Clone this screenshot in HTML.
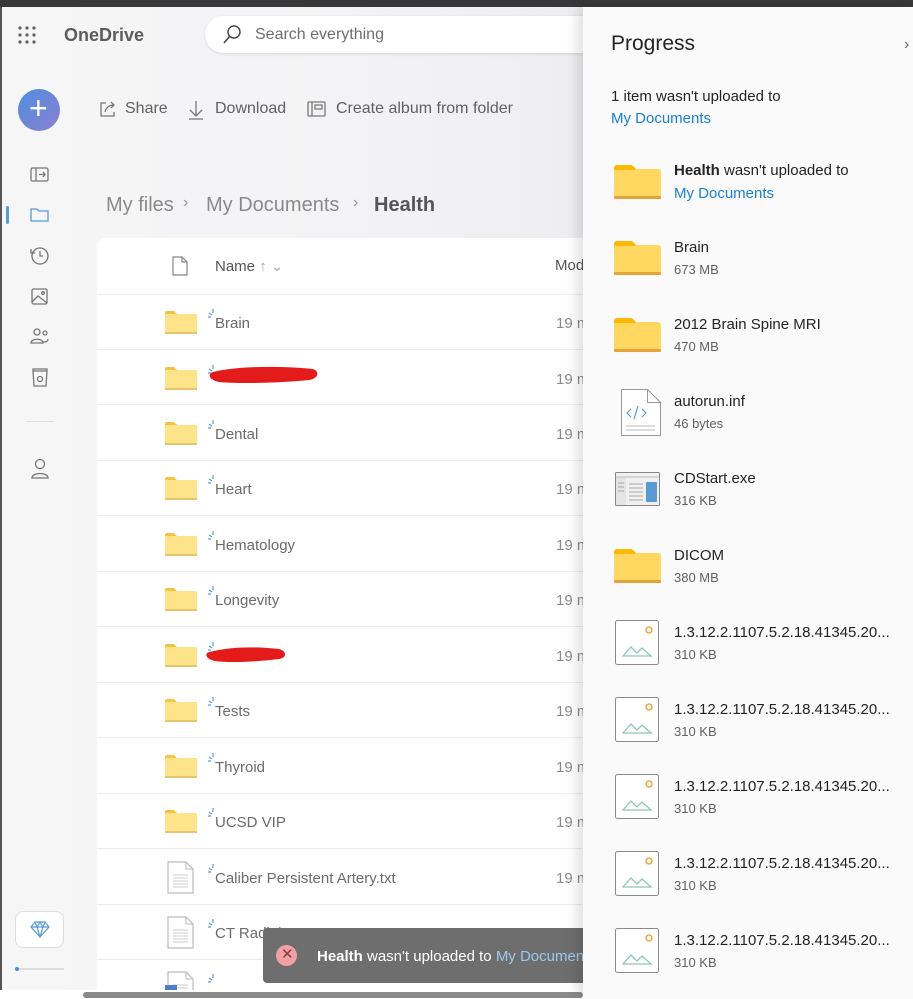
<!DOCTYPE html>
<html><head><meta charset="utf-8"><style>
*{margin:0;padding:0;box-sizing:border-box}
body{width:913px;height:999px;overflow:hidden;position:relative;background:#f5f5f6;font-family:"Liberation Sans",sans-serif;}
.a{position:absolute}
.t{position:absolute;white-space:nowrap}
.fname{position:absolute;left:215px;font-size:15px;color:#6b6b6b}
.date{position:absolute;left:556px;font-size:15px;color:#8a8a8a}
.pn{position:absolute;left:674px;font-size:15px;color:#242424}
.ps{position:absolute;left:674px;font-size:13px;color:#616161}
</style></head><body>
<div class="a" style="left:0;top:0;width:913px;height:7px;background:#383838"></div>
<div class="a" style="left:0;top:7px;width:2px;height:992px;background:#555"></div>
<div class="a" style="left:2px;top:7px;width:581px;height:992px;background:linear-gradient(90deg,#f6f6f7,#f3f3f5 60%,#eeeef0)"></div>

<svg class="a" style="left:17px;top:25px" width="22" height="22"><g fill="#616161"><circle cx="3" cy="3" r="1.6"/><circle cx="10" cy="3" r="1.6"/><circle cx="17" cy="3" r="1.6"/><circle cx="3" cy="10" r="1.6"/><circle cx="10" cy="10" r="1.6"/><circle cx="17" cy="10" r="1.6"/><circle cx="3" cy="17" r="1.6"/><circle cx="10" cy="17" r="1.6"/><circle cx="17" cy="17" r="1.6"/></g></svg>
<div class="t" style="left:64px;top:25px;font-size:18px;font-weight:bold;color:#5c5c5c">OneDrive</div>
<div class="a" style="left:205px;top:16px;width:400px;height:37px;background:#fff;border-radius:19px;box-shadow:0 1px 3px rgba(0,0,0,.12)"></div>
<svg class="a" style="left:222px;top:25px" width="20" height="20"><circle cx="12" cy="7" r="6" fill="none" stroke="#444" stroke-width="1.4"/><path d="M7.5 11.5L2 18" stroke="#444" stroke-width="1.6"/></svg>
<div class="t" style="left:255px;top:26px;font-size:16px;color:#6e6e6e">Search everything</div>

<div class="a" style="left:18px;top:89px;width:42px;height:42px;border-radius:50%;background:linear-gradient(135deg,#4f8fe0,#8a7fd0)"></div>
<div class="t" style="left:29px;top:90px;font-size:32px;color:#fff;font-weight:300">+</div>

<svg class="a" style="left:98px;top:99px" width="20" height="20" fill="none" stroke="#777" stroke-width="1.3"><path d="M8 4H3v13h13v-4"/><path d="M7 13c1-5 5-7 9-7M13 3l3 3-3 3"/></svg>
<div class="t" style="left:125px;top:100px;font-size:16px;color:#616161">Share</div>
<svg class="a" style="left:186px;top:99px" width="20" height="22" fill="none" stroke="#777" stroke-width="1.3"><path d="M10 2v15M4 11l6 6 6-6M3 20h14"/></svg>
<div class="t" style="left:215px;top:100px;font-size:16px;color:#616161">Download</div>
<svg class="a" style="left:307px;top:100px" width="20" height="18" fill="none" stroke="#777" stroke-width="1.3"><rect x="1" y="2" width="17" height="14" rx="1"/><path d="M5 2v14M8 5h7v4H8z"/></svg>
<div class="t" style="left:336px;top:100px;font-size:16px;color:#616161">Create album from folder</div>

<svg class="a" style="left:28px;top:165px" width="24" height="240" fill="none" stroke="#777" stroke-width="1.3">
<rect x="3" y="3" width="17" height="13" rx="1.5"/><path d="M8 3v13M11 9.5h6M15 7l2 2.5-2 2.5"/>
<path d="M3 44h6l2 2h9v10H3z" stroke="#5b9bd5"/>
<circle cx="12" cy="91" r="8"/><path d="M12 86v5h3M3 84v4h4"/>
<rect x="4" y="124" width="15" height="15" rx="1.5"/><path d="M4 137l6-6 9 7"/><circle cx="15" cy="128" r="1.3"/>
<circle cx="9" cy="167" r="3"/><circle cx="17" cy="168" r="2"/><path d="M3 178c0-5 12-5 12 0zM15 177c2 0 5 0 5-3"/>
<path d="M5 206h14l-1 15H6zM5 206v-2h14v2"/><circle cx="12" cy="214" r="2.5"/>
</svg>
<div class="a" style="left:6px;top:206px;width:3px;height:18px;background:#5b9bd5;border-radius:2px"></div>
<div class="a" style="left:26px;top:421px;width:27px;height:1px;background:#ddd"></div>
<svg class="a" style="left:30px;top:458px" width="20" height="22" fill="none" stroke="#777" stroke-width="1.3"><circle cx="10" cy="6" r="4.5"/><path d="M2 20c0-6 16-6 16 0z"/></svg>
<div class="a" style="left:15px;top:911px;width:49px;height:37px;border:1px solid #ddd;border-radius:8px;background:#fff"></div>
<svg class="a" style="left:30px;top:920px" width="20" height="18" fill="none" stroke="#5b9bd5" stroke-width="1.2"><path d="M5 2h10l4 5-9 10L1 7zM1 7h18M7 7l3 10 3-10M5 2l2 5 3-5 3 5 2-5"/></svg>
<div class="a" style="left:15px;top:968px;width:49px;height:2px;background:#ddd"></div>
<div class="a" style="left:15px;top:967px;width:4px;height:4px;background:#4a8fd8;border-radius:2px"></div>

<div class="t" style="left:106px;top:194px;font-size:20px;color:#8a8a8a">My files</div>
<div class="t" style="left:183px;top:194px;font-size:16px;color:#999">›</div>
<div class="t" style="left:206px;top:194px;font-size:20px;color:#8a8a8a">My Documents</div>
<div class="t" style="left:353px;top:194px;font-size:16px;color:#999">›</div>
<div class="t" style="left:374px;top:194px;font-size:20px;color:#555;font-weight:bold">Health</div>

<div class="a" style="left:97px;top:238px;width:486px;height:752px;background:#fff;border-radius:8px 0 0 0"></div>
<svg class="a" style="left:172px;top:256px" width="16" height="20" fill="none" stroke="#888" stroke-width="1.2"><path d="M1 1h9l5 5v13H1zM10 1v5h5"/></svg>
<div class="t" style="left:215px;top:257px;font-size:15px;color:#555">Name <span style="color:#aaa">↑ ⌄</span></div>
<div class="t" style="left:555px;top:257px;font-size:15px;color:#555">Mod</div>
<div class="a" style="left:97px;top:294px;width:486px;height:1px;background:#ececec"></div>

<svg class="a" style="left:0;top:0" width="583" height="999">
<defs>
<g id="fo"><path d="M0 3a2 2 0 0 1 2-2h7l3 3h18v2H0z" fill="#f5c342"/><rect x="0" y="4" width="32" height="20" rx="1.5" fill="#fde48a"/><rect x="0" y="22" width="32" height="2" fill="#e9c56a"/></g>
<g id="sp" stroke="#5b9bd5" stroke-width="1.2"><path d="M4 0v4M0 4l3 2M-1 8h3"/></g>
<g id="tx"><path d="M0 0h18l7 7v24H0z" fill="#fff" stroke="#bbb" stroke-width="1.2"/><path d="M18 0v7h7" fill="none" stroke="#bbb"/><path d="M5 13h15M5 16h15M5 19h15M5 22h15M5 25h15" stroke="#ccc"/></g>
</defs>
<use href="#fo" x="165" y="310"/><use href="#sp" x="209" y="309"/>
<use href="#fo" x="165" y="366"/><use href="#sp" x="209" y="365"/>
<use href="#fo" x="165" y="421"/><use href="#sp" x="209" y="420"/>
<use href="#fo" x="165" y="476"/><use href="#sp" x="209" y="475"/>
<use href="#fo" x="165" y="532"/><use href="#sp" x="209" y="531"/>
<use href="#fo" x="165" y="587"/><use href="#sp" x="209" y="586"/>
<use href="#fo" x="165" y="643"/><use href="#sp" x="209" y="642"/>
<use href="#fo" x="165" y="698"/><use href="#sp" x="209" y="697"/>
<use href="#fo" x="165" y="754"/><use href="#sp" x="209" y="753"/>
<use href="#fo" x="165" y="809"/><use href="#sp" x="209" y="808"/>
<use href="#tx" x="168" y="862"/><use href="#sp" x="209" y="864"/>
<use href="#tx" x="168" y="917"/><use href="#sp" x="209" y="919"/>
<use href="#tx" x="168" y="972"/><use href="#sp" x="209" y="974"/>
<rect x="165" y="985" width="12" height="6" fill="#4a7fd0"/>
<path d="M213 372c20-5 60-7 100-3 8 3 4 10-4 11-30 3-70 4-90 2-10-2-12-8-6-10z" fill="#e31b1b"/>
<path d="M209 652c20-5 45-6 70-3 8 2 8 9 0 10-25 3-50 4-64 2-9-2-11-7-6-9z" fill="#e31b1b"/>
<g fill="#ececec">
<rect x="97" y="349" width="486" height="1"/><rect x="97" y="404" width="486" height="1"/><rect x="97" y="460" width="486" height="1"/><rect x="97" y="515" width="486" height="1"/><rect x="97" y="571" width="486" height="1"/><rect x="97" y="626" width="486" height="1"/><rect x="97" y="682" width="486" height="1"/><rect x="97" y="737" width="486" height="1"/><rect x="97" y="793" width="486" height="1"/><rect x="97" y="848" width="486" height="1"/><rect x="97" y="904" width="486" height="1"/><rect x="97" y="959" width="486" height="1"/>
</g>
</svg>
<div class="fname" style="top:315px">Brain</div>
<div class="fname" style="top:426px">Dental</div>
<div class="fname" style="top:481px">Heart</div>
<div class="fname" style="top:537px">Hematology</div>
<div class="fname" style="top:592px">Longevity</div>
<div class="fname" style="top:703px">Tests</div>
<div class="fname" style="top:759px">Thyroid</div>
<div class="fname" style="top:814px">UCSD VIP</div>
<div class="fname" style="top:870px">Caliber Persistent Artery.txt</div>
<div class="fname" style="top:925px">CT Radiology report</div>
<div class="date" style="top:315px">19 m</div><div class="date" style="top:371px">19 m</div><div class="date" style="top:426px">19 m</div><div class="date" style="top:481px">19 m</div><div class="date" style="top:537px">19 m</div><div class="date" style="top:592px">19 m</div><div class="date" style="top:648px">19 m</div><div class="date" style="top:703px">19 m</div><div class="date" style="top:759px">19 m</div><div class="date" style="top:814px">19 m</div><div class="date" style="top:870px">19 m</div>

<div class="a" style="left:0;top:990px;width:583px;height:9px;background:#fff"></div>
<div class="a" style="left:83px;top:992px;width:500px;height:6px;background:#8a8a8a;border-radius:3px"></div>

<div class="a" style="left:263px;top:928px;width:320px;height:55px;background:#6e6e6e;border-radius:4px 0 0 4px"></div>
<div class="a" style="left:276px;top:945px;width:21px;height:21px;border-radius:50%;background:#f1a1a6"></div>
<div class="t" style="left:281px;top:945px;font-size:15px;color:#8a3b3f">✕</div>
<div class="t" style="left:317px;top:948px;font-size:15px;color:#fff;width:266px;overflow:hidden"><b>Health</b> wasn't uploaded to <span style="color:#9cc8f0">My Documents</span></div>

<div class="a" style="left:583px;top:7px;width:330px;height:992px;background:#fafafa;box-shadow:-6px 0 12px rgba(0,0,0,.12)"></div>
<div class="t" style="left:611px;top:32px;font-size:21px;color:#242424">Progress</div>
<div class="t" style="left:904px;top:36px;font-size:16px;color:#666">›</div>
<div class="t" style="left:611px;top:88px;font-size:15px;color:#242424">1 item wasn't uploaded to</div>
<div class="t" style="left:611px;top:110px;font-size:15px;color:#1a7fd4">My Documents</div>

<svg class="a" style="left:583px;top:0" width="330" height="999">
<defs>
<g id="bf"><path d="M0 3a3 3 0 0 1 3-3h14a3 3 0 0 1 2 1l4 4H0z" fill="#fdb900"/><path d="M0 5h20l3-1h21a3 3 0 0 1 3 3v24a2 2 0 0 1-2 2H2a2 2 0 0 1-2-2z" fill="#ffd761"/><rect x="0" y="31" width="47" height="3" rx="1" fill="#e5a43a"/></g>
<g id="im"><rect x="0.5" y="0.5" width="43" height="44" rx="2" fill="#fff" stroke="#8a8a8a"/><circle cx="34" cy="10" r="3" fill="none" stroke="#f29b1d" stroke-width="1.3"/><path d="M8 36l8-9 6 6 5-5 9 8z" fill="none" stroke="#8ec6b8" stroke-width="1.3"/></g>
</defs>
<use href="#bf" x="31" y="165"/>
<use href="#bf" x="31" y="241"/>
<use href="#bf" x="31" y="318"/>
<use href="#bf" x="31" y="549"/>
<g transform="translate(38,389)"><path d="M0.5 0.5h26l13 13v33h-39z" fill="#fff" stroke="#999"/><path d="M26.5 0.5v13h13" fill="none" stroke="#999"/><path d="M10 20l-4 4 4 4M17 17l-4 13M21 20l4 4-4 4" fill="none" stroke="#5b9bd5" stroke-width="1.2"/><path d="M5 37h29M5 41h29" stroke="#bbb"/></g>
<g transform="translate(32,472)"><rect x="0.5" y="0.5" width="44" height="33" rx="1" fill="#f0f0f0" stroke="#888"/><rect x="1" y="5" width="10" height="28" fill="#e4e4e4"/><path d="M1 5h43" stroke="#bbb"/><path d="M14 12h14M14 16h14M14 20h14M14 24h14M14 28h14M3 11h6M3 15h6M3 19h6" stroke="#aaa"/><rect x="31" y="10" width="11" height="20" rx="1" fill="#5b9bd5"/></g>
<use href="#im" x="32" y="620"/>
<use href="#im" x="32" y="697"/>
<use href="#im" x="32" y="774"/>
<use href="#im" x="32" y="851"/>
<use href="#im" x="32" y="928"/>
</svg>
<div class="pn" style="top:162px"><b>Health</b> wasn't uploaded to</div>
<div class="pn" style="top:185px;color:#1a7fd4">My Documents</div>
<div class="pn" style="top:239px">Brain</div><div class="ps" style="top:262px">673 MB</div>
<div class="pn" style="top:316px">2012 Brain Spine MRI</div><div class="ps" style="top:339px">470 MB</div>
<div class="pn" style="top:393px">autorun.inf</div><div class="ps" style="top:416px">46 bytes</div>
<div class="pn" style="top:470px">CDStart.exe</div><div class="ps" style="top:493px">316 KB</div>
<div class="pn" style="top:547px">DICOM</div><div class="ps" style="top:570px">380 MB</div>
<div class="pn" style="top:624px">1.3.12.2.1107.5.2.18.41345.20...</div><div class="ps" style="top:647px">310 KB</div>
<div class="pn" style="top:701px">1.3.12.2.1107.5.2.18.41345.20...</div><div class="ps" style="top:724px">310 KB</div>
<div class="pn" style="top:778px">1.3.12.2.1107.5.2.18.41345.20...</div><div class="ps" style="top:801px">310 KB</div>
<div class="pn" style="top:855px">1.3.12.2.1107.5.2.18.41345.20...</div><div class="ps" style="top:878px">310 KB</div>
<div class="pn" style="top:932px">1.3.12.2.1107.5.2.18.41345.20...</div><div class="ps" style="top:955px">310 KB</div>
</body></html>
